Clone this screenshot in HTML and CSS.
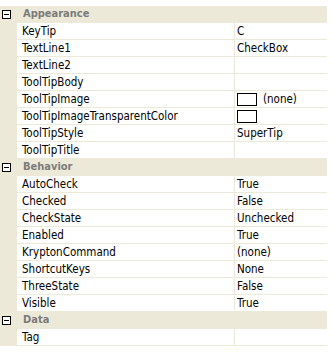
FILE: index.html
```html
<!DOCTYPE html>
<html lang="en">
<head>
  <meta charset="UTF-8">
  <title>Property Grid</title>
  <link rel="stylesheet" href="styles.css">
</head>
<body>
  <div class="grid">
    <!-- Appearance -->
    <div class="cat"><span class="toggle"></span><span class="cat-name">Appearance</span></div>
    <div class="row"><span class="name">KeyTip</span><span class="value">C</span></div>
    <div class="row"><span class="name">TextLine1</span><span class="value">CheckBox</span></div>
    <div class="row"><span class="name">TextLine2</span><span class="value"></span></div>
    <div class="row"><span class="name">ToolTipBody</span><span class="value"></span></div>
    <div class="row"><span class="name">ToolTipImage</span><span class="value"><span class="swatch"></span>(none)</span></div>
    <div class="row"><span class="name">ToolTipImageTransparentColor</span><span class="value"><span class="swatch"></span></span></div>
    <div class="row"><span class="name">ToolTipStyle</span><span class="value">SuperTip</span></div>
    <div class="row"><span class="name">ToolTipTitle</span><span class="value"></span></div>

    <!-- Behavior -->
    <div class="cat"><span class="toggle"></span><span class="cat-name">Behavior</span></div>
    <div class="row"><span class="name">AutoCheck</span><span class="value">True</span></div>
    <div class="row"><span class="name">Checked</span><span class="value">False</span></div>
    <div class="row"><span class="name">CheckState</span><span class="value">Unchecked</span></div>
    <div class="row"><span class="name">Enabled</span><span class="value">True</span></div>
    <div class="row"><span class="name">KryptonCommand</span><span class="value">(none)</span></div>
    <div class="row"><span class="name">ShortcutKeys</span><span class="value">None</span></div>
    <div class="row"><span class="name">ThreeState</span><span class="value">False</span></div>
    <div class="row"><span class="name">Visible</span><span class="value">True</span></div>

    <!-- Data -->
    <div class="cat"><span class="toggle"></span><span class="cat-name">Data</span></div>
    <div class="row"><span class="name">Tag</span><span class="value"></span></div>
  </div>
</body>
</html>
```

FILE: styles.css
```css
/* Global */
* {
  margin: 0;
  padding: 0;
  box-sizing: border-box;
}

body {
  background: #fff;
  font-family: 'DejaVu Sans Condensed', 'DejaVu Sans', sans-serif;
  font-size: 11.5px;
  color: #000;
  padding-top: 6px;
}

/* Grid */
.grid {
  width: 327px;
  background: #ece9d8;
}

.cat,
.row {
  display: flex;
  height: 17px;
  border-bottom: 1px solid #ece9d8;
  line-height: 16px;
}

.cat {
  align-items: center;
}

.toggle {
  position: relative;
  width: 9px;
  height: 9px;
  margin: 0 10px 0 2px;
  border: 1px solid #000;
  background: #fff;
}

.toggle::after {
  content: "";
  position: absolute;
  left: 1px;
  top: 3px;
  width: 5px;
  height: 1px;
  background: #000;
}

.cat-name {
  font-size: 11px;
  font-weight: bold;
  color: #7b7b7b;
  padding-left: 2px;
}

.row .name {
  margin-left: 17px;
  width: 218px;
  padding-left: 5px;
  background: #fff;
  border-right: 1px solid #ece9d8;
  white-space: nowrap;
  overflow: hidden;
}

.row .value {
  flex: 1;
  display: flex;
  align-items: center;
  padding-left: 2px;
  background: #fff;
}

.swatch {
  width: 20px;
  height: 13px;
  border: 1px solid #000;
  background: #fff;
  margin-right: 6px;
}
```
